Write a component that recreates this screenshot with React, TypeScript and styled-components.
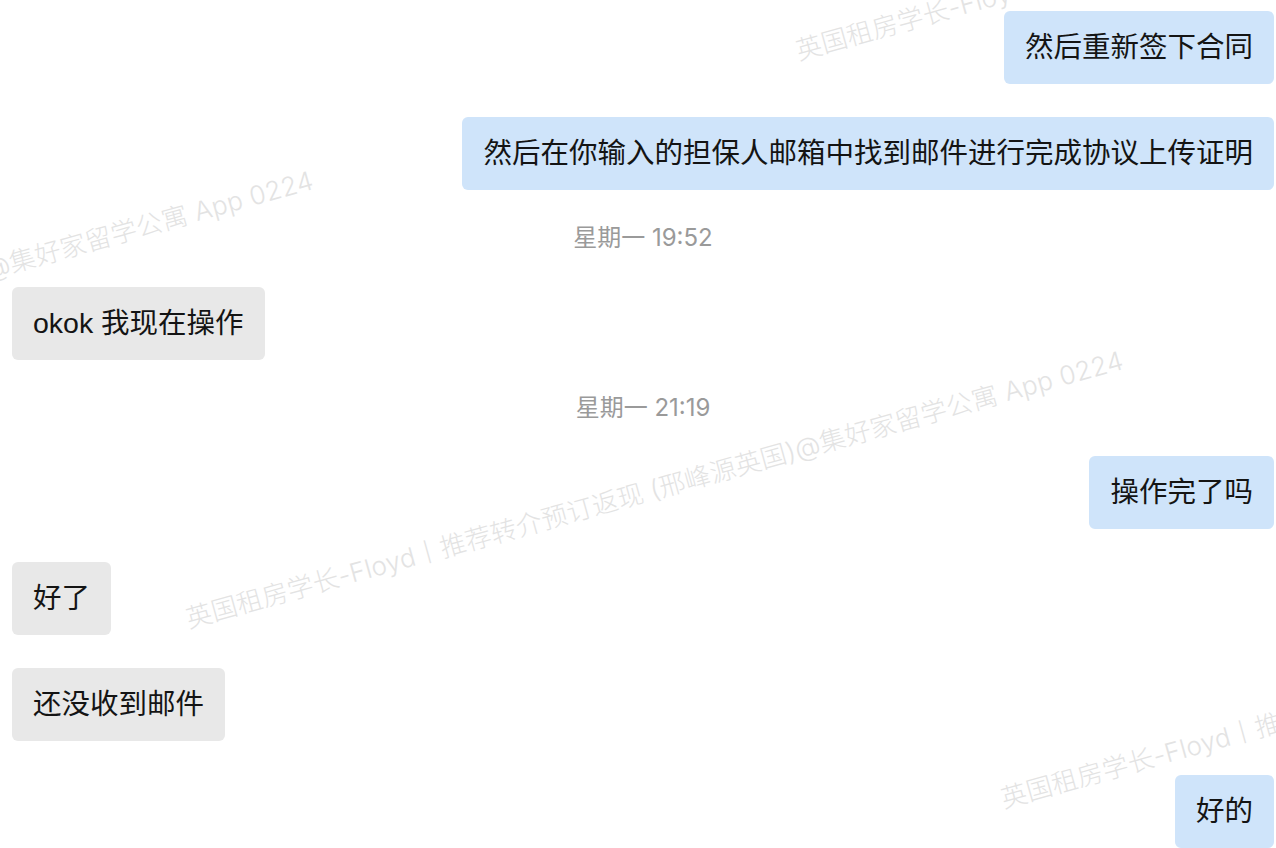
import styled, { createGlobalStyle } from "styled-components";

const GlobalStyle = createGlobalStyle`
  html, body {
    margin: 0;
    padding: 0;
    background: #ffffff;
    overflow: hidden;
  }
  body {
    font-family: "Noto Sans CJK SC", sans-serif;
  }
`;

const Screen = styled.div`
  position: relative;
  width: 1276px;
  height: 848px;
  overflow: hidden;
  background: #ffffff;
`;

const Thread = styled.div`
  display: flex;
  flex-direction: column;
  gap: 33.2px;
  padding: 11px 2px 0 12px;
`;

const Row = styled.div<{ $mine?: boolean }>`
  display: flex;
  justify-content: ${(p) => (p.$mine ? "flex-end" : "flex-start")};
`;

const Bubble = styled.div<{ $mine?: boolean }>`
  font-family: "Liberation Sans", "Noto Sans CJK SC", sans-serif;
  font-size: 28.5px;
  line-height: 39px;
  padding: 17px 21px;
  border-radius: 6px;
  color: #141414;
  white-space: nowrap;
  background: ${(p) => (p.$mine ? "#cfe4fa" : "#e8e8e8")};
`;

const Stamp = styled.div`
  text-align: center;
  font-family: Inter, "Noto Sans CJK SC", sans-serif;
  font-size: 24px;
  line-height: 30px;
  color: #9a9a9a;
`;

const Watermarks = styled.div`
  position: absolute;
  inset: 0;
  pointer-events: none;
`;

const Mark = styled.span`
  position: absolute;
  font-family: Inter, "Noto Sans CJK SC", sans-serif;
  font-size: 26px;
  line-height: 26px;
  font-weight: 300;
  letter-spacing: 0.3px;
  color: #e3e3e3;
  white-space: nowrap;
  transform-origin: 0 100%;
  transform: rotate(-15.5deg);
`;

const MARK_TEXT = "英国租房学长-Floyd丨推荐转介预订返现 (邢峰源英国)@集好家留学公寓 App 0224";

// start points (bottom-left of first glyph)
const marks = [
  { x: 800, y: 64 },
  { x: -620, y: 452 },
  { x: 190, y: 632 },
  { x: 1005, y: 812 },
];

type Item =
  | { kind: "msg"; mine: boolean; text: string }
  | { kind: "time"; text: string };

const items: Item[] = [
  { kind: "msg", mine: true, text: "然后重新签下合同" },
  { kind: "msg", mine: true, text: "然后在你输入的担保人邮箱中找到邮件进行完成协议上传证明" },
  { kind: "time", text: "星期一 19:52" },
  { kind: "msg", mine: false, text: "okok 我现在操作" },
  { kind: "time", text: "星期一 21:19" },
  { kind: "msg", mine: true, text: "操作完了吗" },
  { kind: "msg", mine: false, text: "好了" },
  { kind: "msg", mine: false, text: "还没收到邮件" },
  { kind: "msg", mine: true, text: "好的" },
];

const App = () => {
  return (
    <Screen>
      <GlobalStyle />
      <Thread>
        {items.map((it, i) =>
          it.kind === "time" ? (
            <Stamp key={i}>{it.text}</Stamp>
          ) : (
            <Row key={i} $mine={it.mine}>
              <Bubble $mine={it.mine}>{it.text}</Bubble>
            </Row>
          )
        )}
      </Thread>
      <Watermarks>
        {marks.map((m, i) => (
          <Mark key={i} style={{ left: m.x, top: m.y - 26 }}>
            {MARK_TEXT}
          </Mark>
        ))}
      </Watermarks>
    </Screen>
  );
};

export default App;
